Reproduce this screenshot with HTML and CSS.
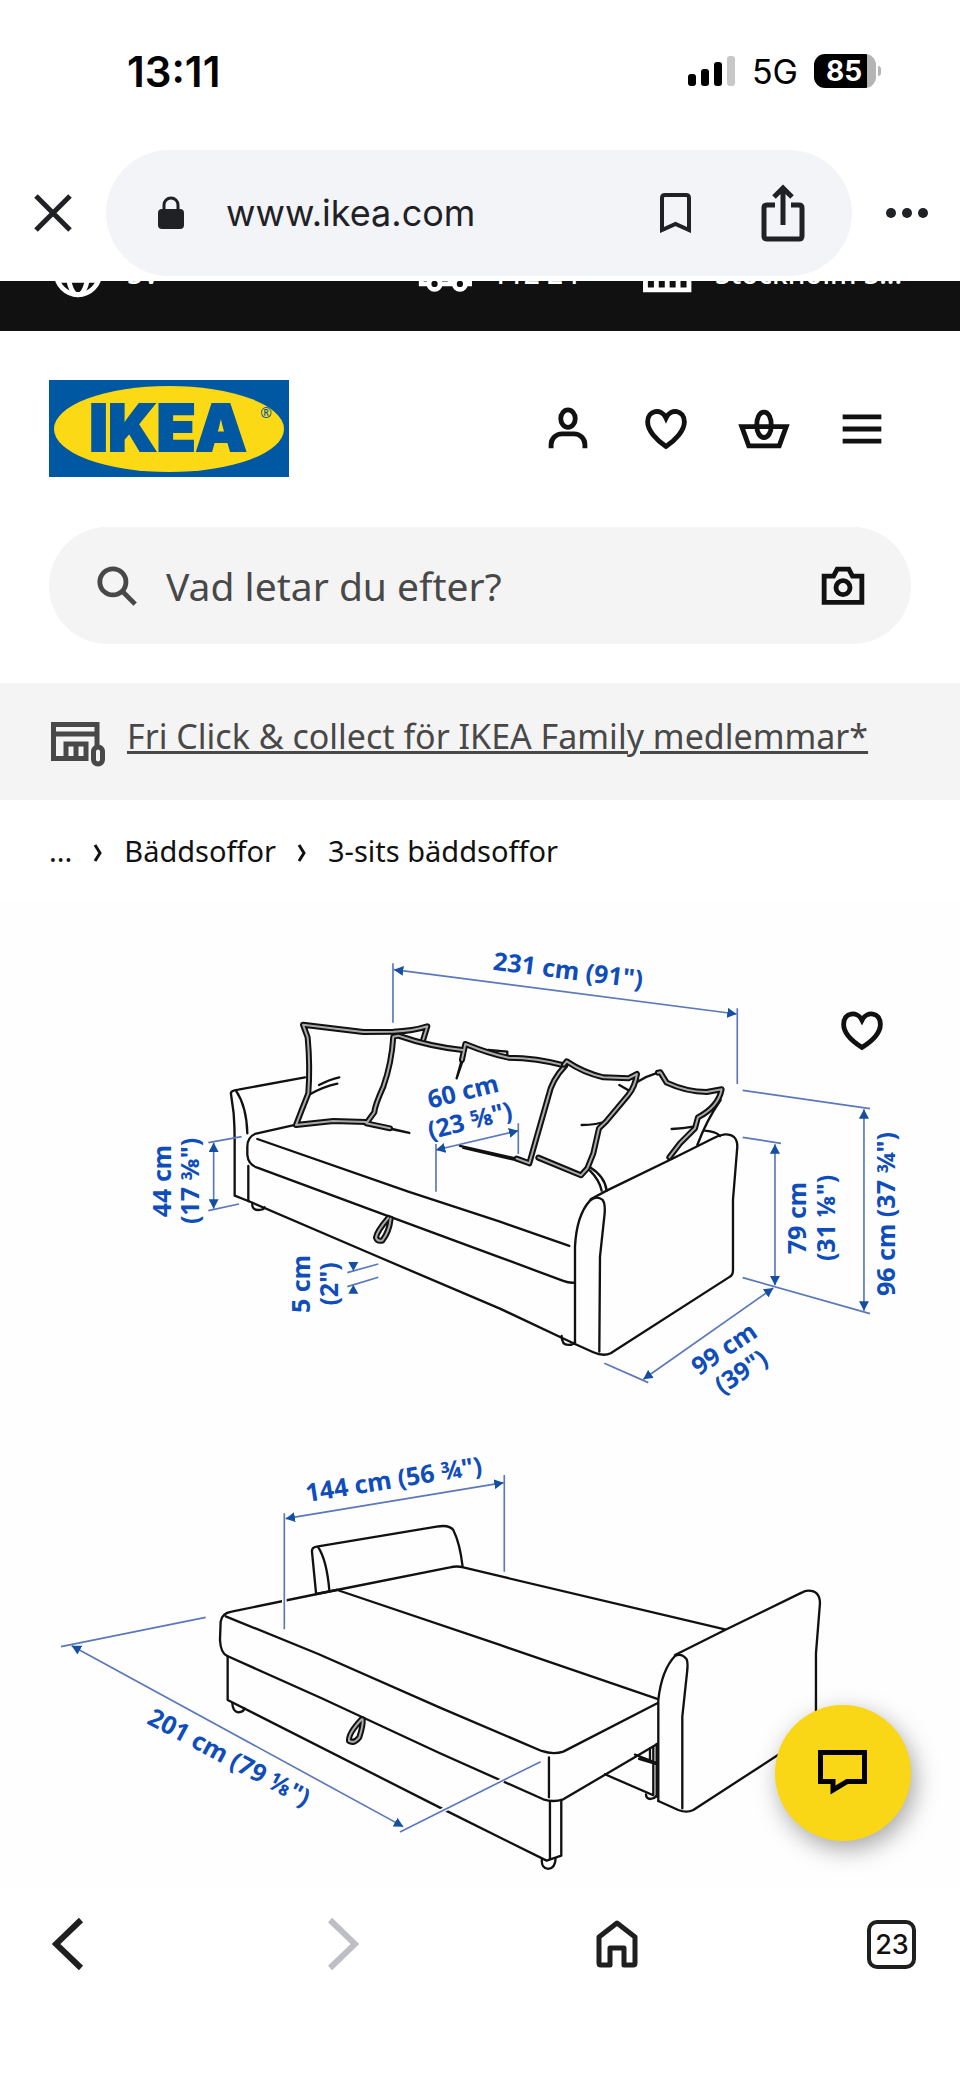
FILE: index.html
```html
<!DOCTYPE html>
<html lang="sv">
<head>
    <meta charset="UTF-8">
    <meta name="viewport" content="width=device-width, initial-scale=1.0">
    <title>IKEA - 3-sits bäddsoffor</title>
    <link rel="stylesheet" href="styles.css">
</head>
<body>
    <div class="browser-top">
        <div class="status-bar">
            <span class="time">13:11</span>
            <div class="status-icons">
                <svg width="48" height="30" viewBox="0 0 48 30" aria-hidden="true">
                    <rect x="0" y="18" width="8" height="12" rx="3"/>
                    <rect x="13" y="13" width="8" height="17" rx="3"/>
                    <rect x="26" y="6" width="8" height="24" rx="3"/>
                    <rect x="39" y="0" width="8" height="30" rx="3" fill="#c8c8c8"/>
                </svg>
                <span class="network">5G</span>
                <div class="battery"><span class="battery-level">85</span></div>
            </div>
        </div>
        <div class="address-bar">
            <button type="button" class="icon-btn" aria-label="Stäng">
                <svg width="38" height="38" viewBox="0 0 38 38" class="stroke-dark"><path d="M2 2 36 36M36 2 2 36" stroke-width="5"/></svg>
            </button>
            <div class="url-pill">
                <svg width="26" height="34" viewBox="0 0 26 34" fill="#1f2124" aria-hidden="true">
                    <rect x="0" y="13" width="26" height="20" rx="4"/>
                    <path d="M6 14V9a7 7 0 0 1 14 0v5" fill="none" stroke="#1f2124" stroke-width="3"/>
                </svg>
                <input type="text" class="url" value="www.ikea.com" aria-label="Adress">
                <button type="button" class="icon-btn" aria-label="Bokmärk">
                    <svg width="31" height="40" viewBox="0 0 31 40" class="stroke-dark"><path d="M2 37V5q0-3 3-3h21q3 0 3 3v32l-13.500-6z"/></svg>
                </button>
                <button type="button" class="icon-btn share" aria-label="Dela">
                    <svg width="44" height="58" viewBox="0 0 44 58" class="stroke-dark">
                        <path d="M14 21H6q-3 0-3 3v28q0 3 3 3h32q3 0 3-3V24q0-3-3-3h-8" stroke-width="5"/>
                        <path d="M22 41V4M13 13l9-9 9 9" stroke-width="5"/>
                    </svg>
                </button>
            </div>
            <button type="button" class="icon-btn" aria-label="Mer">
                <svg width="42" height="10" viewBox="0 0 42 10" fill="#1f2124"><circle cx="5" cy="5" r="5"/><circle cx="21" cy="5" r="5"/><circle cx="37" cy="5" r="5"/></svg>
            </button>
        </div>
    </div>

    <div class="utility-bar">
        <a href="#" class="utility-lang">
            <svg width="58" height="58" viewBox="0 0 24 24" class="stroke-white"><circle cx="12" cy="12" r="9"/><ellipse cx="12" cy="12" rx="4" ry="9"/><path d="M3.500 9h17M3.500 15h17"/></svg>
            SV
        </a>
        <a href="#" class="utility-post">
            <svg width="58" height="58" viewBox="0 0 24 24" class="stroke-white"><path d="M3 6.500h12v10H3zM15 9.500h5l3 4v3h-8"/><circle cx="8.500" cy="16.500" r="2.300" fill="#111"/><circle cx="19" cy="16.500" r="2.300" fill="#111"/></svg>
            112 24
        </a>
        <a href="#" class="utility-store">
            <svg width="58" height="58" viewBox="0 0 24 24" class="stroke-white"><path d="M3.500 5h18v14h-18zM3.500 10h18M8 10v9M12.500 10v9M17 10v9"/></svg>
            Stockholm S...
        </a>
    </div>

    <header class="site-header">
        <div class="header-row">
            <a href="#" class="logo" aria-label="IKEA">
                <svg width="240" height="97" viewBox="0 0 240 97">
                    <rect width="240" height="97" fill="#0058a3"/>
                    <ellipse cx="120" cy="49" rx="115" ry="43" fill="#fbd914"/>
                    <text x="119" y="71" class="logo-text">IKEA</text>
                    <text x="217" y="38" class="logo-reg">®</text>
                </svg>
            </a>
            <nav class="header-icons">
                <button type="button" aria-label="Logga in">
                    <svg width="58" height="58" viewBox="0 0 24 24"><ellipse cx="12" cy="7.700" rx="3" ry="3.600"/><path d="M5 20v-1.500a4.500 4.500 0 0 1 4.500-4.500h5a4.500 4.500 0 0 1 4.500 4.500V20"/></svg>
                </button>
                <button type="button" aria-label="Favoriter">
                    <svg width="58" height="58" viewBox="0 0 24 24"><path d="M12 19.200C8 16.500 4.400 12.600 4.400 9.100c0-5 5.700-5.800 7.600-1.700 1.900-4.100 7.600-3.300 7.600 1.700 0 3.500-3.600 7.400-7.600 10.100z"/></svg>
                </button>
                <button type="button" aria-label="Varukorg">
                    <svg width="58" height="58" viewBox="0 0 24 24"><path d="M2.800 11h18.400l-2.900 8H5.700z"/><path d="M12 5c-2 0-3 2.500-3 5.500S10.300 15.500 12 15.500s3-2 3-5S14 5 12 5z"/></svg>
                </button>
                <button type="button" aria-label="Meny">
                    <svg width="58" height="58" viewBox="0 0 24 24"><path d="M4 7h16M4 12h16M4 17h16"/></svg>
                </button>
            </nav>
        </div>
        <form class="search">
            <svg width="58" height="58" viewBox="0 0 24 24" class="search-icon" aria-hidden="true"><circle cx="10.300" cy="10.300" r="5.400"/><path d="M14.200 14.200l5.300 5.300"/></svg>
            <input type="text" placeholder="Vad letar du efter?" aria-label="Sök">
            <button type="button" class="camera" aria-label="Sök med bild">
                <svg width="58" height="58" viewBox="0 0 24 24"><path d="M4.200 7.900h3.900l1.500-2.900h4.800l1.500 2.900h3.900v10.900H4.200z"/><circle cx="12" cy="12.700" r="2.900"/></svg>
            </button>
        </form>
    </header>

    <div class="banner">
        <svg width="54" height="45" viewBox="0 0 54 45" class="banner-icon" aria-hidden="true">
            <path d="M46 24V2.500H2.500v34H35V22H15v14M2.500 12H46M25 22v14"/>
            <rect x="42.500" y="25" width="9" height="17" rx="4.500"/>
        </svg>
        <a href="#">Fri Click &amp; collect för IKEA Family medlemmar*</a>
    </div>

    <nav class="breadcrumb" aria-label="Brödsmulor">
        <a href="#">...</a>
        <svg width="10" height="18" viewBox="0 0 10 18"><path d="M2 1l5 8-5 8"/></svg>
        <a href="#">Bäddsoffor</a>
        <svg width="10" height="18" viewBox="0 0 10 18"><path d="M2 1l5 8-5 8"/></svg>
        <a href="#">3-sits bäddsoffor</a>
    </nav>

    <main class="gallery">
        <svg class="drawing" viewBox="0 900 960 988" role="img" aria-label="Måttskiss bäddsoffa">
            <defs>
                <marker id="arrow" viewBox="0 0 28 30" refX="28" refY="15" markerWidth="28" markerHeight="30" markerUnits="userSpaceOnUse" orient="auto-start-reverse">
                    <path d="M0 0 28 15 0 30z" fill="#1550a0"/>
                </marker>
                <g id="kuddar-vanster">
                    <path d="M880 358 892 319Q850 333 790 335L700 336 519 314 533 352Q541 440 535 520 515 570 498 615L610 603 708 606"/>
                    <path d="M998 390Q900 380 805 347L790 350Q785 430 760 500 735 555 733 577L709 610 780 625"/>
                    <path d="M996 420 1006 372Q1080 402 1135 413 1220 413 1306 437 1265 480 1255 530L1215 670 1198 730 1160 716"/>
                    <path d="M775 894Q740 935 738 953 742 965 757 962 778 935 782 896"/>
                </g>
                <g id="kuddar-hoger">
                    <path d="M192 434 200 424Q250 458 310 472L385 475 411 462Q405 500 385 525L318 605 297 625 280 700 262 745 243 766 115 713"/>
                    <path d="M474 458 481 457 500 488Q560 516 620 516L665 508Q655 560 594 592L585 625 540 670 508 712"/>
                </g>
                <path id="ogla" d="M965 838Q925 880 927 903 942 912 958 892 970 855 968 838"/>
            </defs>

            <!-- Soffa -->
            <g class="line" transform="translate(130 920) scale(.3333)">
                <path d="M525 472 325 509Q300 512 303 522L311 580Q314 620 314 660V827L355 843"/>
                <path d="M318 512Q350 560 352 640M355 738V843"/>
                <path d="M495 615 375 642Q352 652 352 680V705Q355 735 382 743L720 868 1110 1012 1300 1083Q1318 1090 1335 1088"/>
                <path d="M382 657 835 815 1110 905 1318 978"/>
                <path d="M355 843 720 1000 1110 1166 1335 1272"/>
                <path d="M367 850Q365 870 385 870 402 870 404 862"/>
                <path d="M540 523Q580 500 622 491M567 495Q600 478 628 472M780 625 838 639M709 612 838 639"/>
                <path d="M980 475 996 418M980 475 1004 405M1075 390 1132 395V412M1160 716 990 678M1165 722 1000 684"/>
                <use href="#kuddar-vanster" class="piping"/>
                <use href="#kuddar-vanster" class="piping-inner"/>
            </g>
            <g class="line" transform="translate(500 920) scale(.3333)">
                <path d="M185 1248Q185 1275 205 1275 222 1275 225 1265"/>
                <path d="M225 1272V980Q230 885 270 842 290 825 308 840 316 850 314 880L300 1010 298 1295"/>
                <path d="M225 1272 280 1297Q310 1310 332 1300L690 1070Q699 1065 699 1050V840L712 680Q712 642 675 643 655 645 640 655L520 715 320 812 272 838"/>
                <path d="M410 487Q440 468 474 458M662 540Q620 600 592 675M515 627Q550 625 580 620M615 632Q650 635 660 648"/>
                <path d="M270 742Q315 770 320 812M270 752Q298 780 305 812M245 615Q290 615 320 603M358 495 388 512"/>
                <use href="#kuddar-hoger" class="piping"/>
                <use href="#kuddar-hoger" class="piping-inner"/>
            </g>

            <!-- Mått soffa -->
            <g class="dim" transform="translate(130 920) scale(.3333)">
                <path d="M789 130V308M1822 265V492M918 672V815M1165 610V702M235 668 335 650M235 872 327 852M652 1058 745 1032M652 1100 745 1072"/>
                <path class="arrows" d="M792 149 1820 282"/>
                <path class="arrows" d="M918 690 1165 632"/>
                <path class="arrows" d="M251 668V866"/>
                <path d="M655 1026h30l-15 27zM655 1121h30l-15-27z" class="heads"/>
            </g>
            <g class="dim" transform="translate(500 920) scale(.3333)">
                <path d="M728 511 1110 566M728 652 843 670M728 1073 1110 1181M313 1330 445 1388"/>
                <path class="arrows" d="M825 673V1096"/>
                <path class="arrows" d="M1092 568V1172"/>
                <path class="arrows" d="M820 1104 430 1378"/>
            </g>
            <g class="dim-text">
                <text transform="translate(567 979) rotate(7)">231 cm (91")</text>
                <text transform="translate(465 1100) rotate(-14)">60 cm</text>
                <text transform="translate(472 1129) rotate(-14)">(23 ⅝")</text>
                <text transform="translate(171 1181) rotate(-90)">44 cm</text>
                <text transform="translate(199 1181) rotate(-90)">(17 ⅜")</text>
                <text transform="translate(310 1284) rotate(-90)">5 cm</text>
                <text transform="translate(338 1284) rotate(-90)">(2")</text>
                <text transform="translate(806 1218) rotate(-90)">79 cm</text>
                <text transform="translate(835 1218) rotate(-90)">(31 ⅛")</text>
                <text transform="translate(895 1214) rotate(-90)">96 cm (37 ¾")</text>
                <text transform="translate(729 1356) rotate(-34)">99 cm</text>
                <text transform="translate(746 1379) rotate(-34)">(39")</text>
            </g>

            <!-- Bädd -->
            <g class="line" transform="translate(40 1440) scale(.3333)">
                <path d="M828 458 816 335Q815 322 830 320L1190 260Q1228 253 1240 270 1260 310 1268 380M835 322Q860 360 868 450"/>
                <path d="M890 450 575 515Q545 520 542 545L540 600Q542 640 562 648"/>
                <path d="M828 462 890 450 1230 382Q1250 377 1270 382L1390 411 2055 568"/>
                <path d="M892 450 1380 615 1852 777"/>
                <path d="M557 529 835 642 1200 803 1505 933Q1540 945 1570 935L1852 790M1527 952V1072"/>
                <path d="M562 648 845 775 1200 940 1510 1078Q1540 1088 1570 1078L1852 912"/>
                <path d="M563 650V780L1200 1103 1520 1262 1564 1247V1082M1530 1085V1258"/>
                <path d="M577 790Q578 815 595 817 612 815 613 805M1506 1258Q1503 1285 1525 1287 1546 1285 1547 1255"/>
                <use href="#ogla" class="piping"/>
                <use href="#ogla" class="piping-inner"/>
            </g>
            <g class="line" transform="translate(440 1440) scale(.3333)">
                <path d="M495 1003 640 1066M585 944 652 970M597 957 652 973M630 925V962M640 920V1066M650 912V1070"/>
                <path d="M618 1063Q618 1077 632 1077 645 1075 652 1066"/>
                <path d="M655 1083V780Q665 690 705 648 725 638 740 658 744 665 742 690L727 830V1105"/>
                <path d="M655 1083 715 1110Q740 1120 760 1110L1128 871V640L1140 490Q1140 452 1105 452 1095 452 1085 458L855 570 705 645"/>
            </g>

            <!-- Mått bädd -->
            <g class="dim" transform="translate(40 1440) scale(.3333)">
                <path class="halo" d="M733 470V495M1195 1118 1225 1103M1365 1033 1390 1020"/>
                <path d="M733 220V568M1393 105V395M63 620 497 532M1080 1176 1502 965"/>
                <path class="arrows" d="M737 236 1391 128"/>
                <path class="arrows" d="M95 617 1090 1160"/>
            </g>
            <g class="dim-text">
                <text transform="translate(395 1488) rotate(-9)">144 cm (56 ¾")</text>
                <text transform="translate(225 1765) rotate(28)">201 cm (79 ⅛")</text>
            </g>
        </svg>
        <button type="button" class="favourite" aria-label="Spara i favoriter">
            <svg width="58" height="58" viewBox="0 0 24 24"><path d="M12 19.200C8 16.700 4.400 13.100 4.400 9.600c0-5 5.700-5.600 7.600-1.700 1.900-3.900 7.600-3.300 7.600 1.700 0 3.500-3.600 7.100-7.600 9.600z"/></svg>
        </button>
        <button type="button" class="chat" aria-label="Chatta">
            <svg width="50" height="46" viewBox="0 0 50 46"><path d="M2.500 2.500h44v29H29L15 40v-8.500H2.500z"/></svg>
        </button>
    </main>

    <nav class="toolbar">
        <button type="button" aria-label="Tillbaka">
            <svg width="32" height="54" viewBox="0 0 32 54"><path d="M29 3 4 27l25 24"/></svg>
        </button>
        <button type="button" class="forward" aria-label="Framåt" disabled>
            <svg width="32" height="54" viewBox="0 0 32 54"><path d="M3 3l25 24L3 51"/></svg>
        </button>
        <button type="button" aria-label="Hem">
            <svg width="44" height="48" viewBox="0 0 44 48" class="home"><path d="M22 3 4 17v26q0 2 2 2h9V28h14v17h9q2 0 2-2V17z"/></svg>
        </button>
        <button type="button" aria-label="Flikar"><span class="tabs">23</span></button>
    </nav>
</body>
</html>
```
FILE: styles.css
```css
* {
    box-sizing: border-box;
}

body {
    margin: 0;
    background-color: #fff;
    color: #111;
    font-family: "Noto Sans", sans-serif;
}

button {
    display: flex;
    align-items: center;
    justify-content: center;
    padding: 0;
    border: none;
    background: none;
    color: inherit;
}

svg {
    display: block;
    flex: none;
}

input {
    min-width: 0;
    border: none;
    background: none;
    outline: none;
}

a {
    color: inherit;
    text-decoration: none;
}

/* Webbläsarens topp */
.browser-top {
    position: relative;
    z-index: 2;
    background-color: #fff;
    font-family: Inter, sans-serif;
}

.status-bar {
    display: flex;
    justify-content: space-between;
    align-items: center;
    height: 142px;
    padding: 0 84px 0 127px;
}

.time {
    font-size: 42px;
    font-weight: 600;
    color: #000;
}

.status-icons {
    display: flex;
    align-items: center;
    gap: 16px;
}

.network {
    font-size: 34px;
    color: #000;
}

.battery {
    position: relative;
    width: 62px;
    height: 34px;
    border-radius: 11px;
    background: linear-gradient(to right, #000 85%, #b4b4b4 85%);
}

.battery::after {
    content: "";
    position: absolute;
    left: 64px;
    top: 12px;
    width: 3px;
    height: 10px;
    border-radius: 0 3px 3px 0;
    background-color: #b4b4b4;
}

.battery-level {
    display: block;
    padding-right: 2px;
    text-align: center;
    line-height: 34px;
    font-size: 28px;
    font-weight: 700;
    color: #fff;
}

.address-bar {
    display: flex;
    align-items: center;
    gap: 34px;
    padding: 8px 32px 5px 34px;
}

.url-pill {
    flex: 1;
    display: flex;
    align-items: center;
    min-width: 0;
    height: 126px;
    padding: 0 47px 0 52px;
    border-radius: 63px;
    background-color: #f2f4f7;
}

.url {
    flex: 1;
    margin-left: 42px;
    padding: 0;
    font-family: Inter, sans-serif;
    font-size: 36px;
    color: #1f2124;
}

.share {
    margin-left: 70px;
}

.stroke-dark {
    fill: none;
    stroke: #1f2124;
    stroke-width: 4;
}

/* Svart rad, delvis dold under adressfältet */
.utility-bar {
    display: flex;
    align-items: center;
    height: 116px;
    margin-top: -66px;
    padding: 0 58px 0 49px;
    background-color: #111;
    color: #fff;
    font-size: 28px;
    font-weight: 500;
    line-height: 36px;
    white-space: nowrap;
}

.utility-bar a {
    display: flex;
    align-items: center;
    gap: 20px;
}

.utility-post {
    margin-left: auto;
}

.utility-store {
    margin-left: 58px;
}

.stroke-white {
    fill: none;
    stroke: #fff;
    stroke-width: 2;
}

/* Sidhuvud */
.site-header {
    padding: 49px 49px 39px;
}

.header-row {
    display: flex;
    justify-content: space-between;
    align-items: center;
}

.logo-text {
    font-family: Inter, sans-serif;
    font-size: 64px;
    font-weight: 900;
    text-anchor: middle;
    fill: #0058a3;
    stroke: #0058a3;
    stroke-width: 2;
}

.logo-reg {
    font-size: 14px;
    text-anchor: middle;
    fill: #0058a3;
}

.header-icons {
    display: flex;
}

.header-icons button {
    width: 98px;
    height: 97px;
}

.header-icons svg,
.camera svg,
.favourite svg {
    fill: none;
    stroke: #111;
    stroke-width: 2;
}

.search {
    display: flex;
    align-items: center;
    height: 117px;
    margin-top: 50px;
    padding: 0 39px;
    border-radius: 59px;
    background-color: #f4f4f4;
}

.search-icon {
    fill: none;
    stroke: #484848;
    stroke-width: 2;
}

.search input {
    flex: 1;
    margin-left: 20px;
    padding: 0;
    font-family: inherit;
    font-size: 39px;
    color: #484848;
}

.search input::placeholder {
    color: #484848;
    opacity: 1;
}

/* Banner */
.banner {
    display: flex;
    gap: 22px;
    padding: 31px 49px 33px 51px;
    background-color: #f4f4f4;
    color: #484848;
    font-size: 34px;
    line-height: 44px;
}

.banner a {
    text-decoration: underline;
}

.banner-icon {
    margin-top: 8px;
    fill: none;
    stroke: #484848;
    stroke-width: 5;
}

.breadcrumb {
    display: flex;
    align-items: center;
    gap: 21px;
    height: 100px;
    padding: 0 49px;
    font-size: 29px;
}

.breadcrumb svg {
    margin-top: 6px;
    fill: none;
    stroke: #111;
    stroke-width: 3;
}

/* Produktbild */
.gallery {
    position: relative;
    background-color: #fefefe;
}

.drawing {
    width: 100%;
}

.line {
    fill: none;
    stroke: #111;
    stroke-width: 7;
    stroke-linejoin: round;
    stroke-linecap: round;
}

.piping {
    stroke-width: 18;
}

.piping-inner {
    stroke: #aaa;
    stroke-width: 6;
}

.dim {
    fill: none;
    stroke: #5a78ba;
    stroke-width: 5;
}

.arrows {
    marker-start: url(#arrow);
    marker-end: url(#arrow);
}

.heads {
    fill: #1550a0;
    stroke: none;
}

.halo {
    stroke: #fff;
    stroke-width: 14;
}

.dim-text {
    font-size: 25px;
    font-weight: 700;
    text-anchor: middle;
    fill: #0f4dba;
}

.favourite {
    position: absolute;
    top: 81px;
    right: 49px;
    width: 98px;
    height: 98px;
}

.chat {
    position: absolute;
    right: 49px;
    bottom: 47px;
    width: 136px;
    height: 136px;
    border-radius: 50%;
    background-color: #f9d616;
    box-shadow: 4px 8px 24px rgba(0, 0, 0, 0.35);
}

.chat svg {
    fill: none;
    stroke: #000;
    stroke-width: 5;
}

/* Nedre verktygsfält */
.toolbar {
    display: flex;
    justify-content: space-between;
    padding: 29px 36px 110px;
}

.toolbar button {
    width: 64px;
    height: 54px;
}

.toolbar svg {
    fill: none;
    stroke: #1f1f1f;
    stroke-width: 6;
}

.toolbar .home {
    stroke-width: 5;
    stroke-linejoin: round;
}

.toolbar .forward svg {
    stroke: #bdbfc5;
}

.tabs {
    width: 49px;
    height: 49px;
    border: 4px solid #1f1f1f;
    border-radius: 10px;
    font-family: Inter, sans-serif;
    font-size: 27px;
    font-weight: 500;
    line-height: 41px;
}
```
